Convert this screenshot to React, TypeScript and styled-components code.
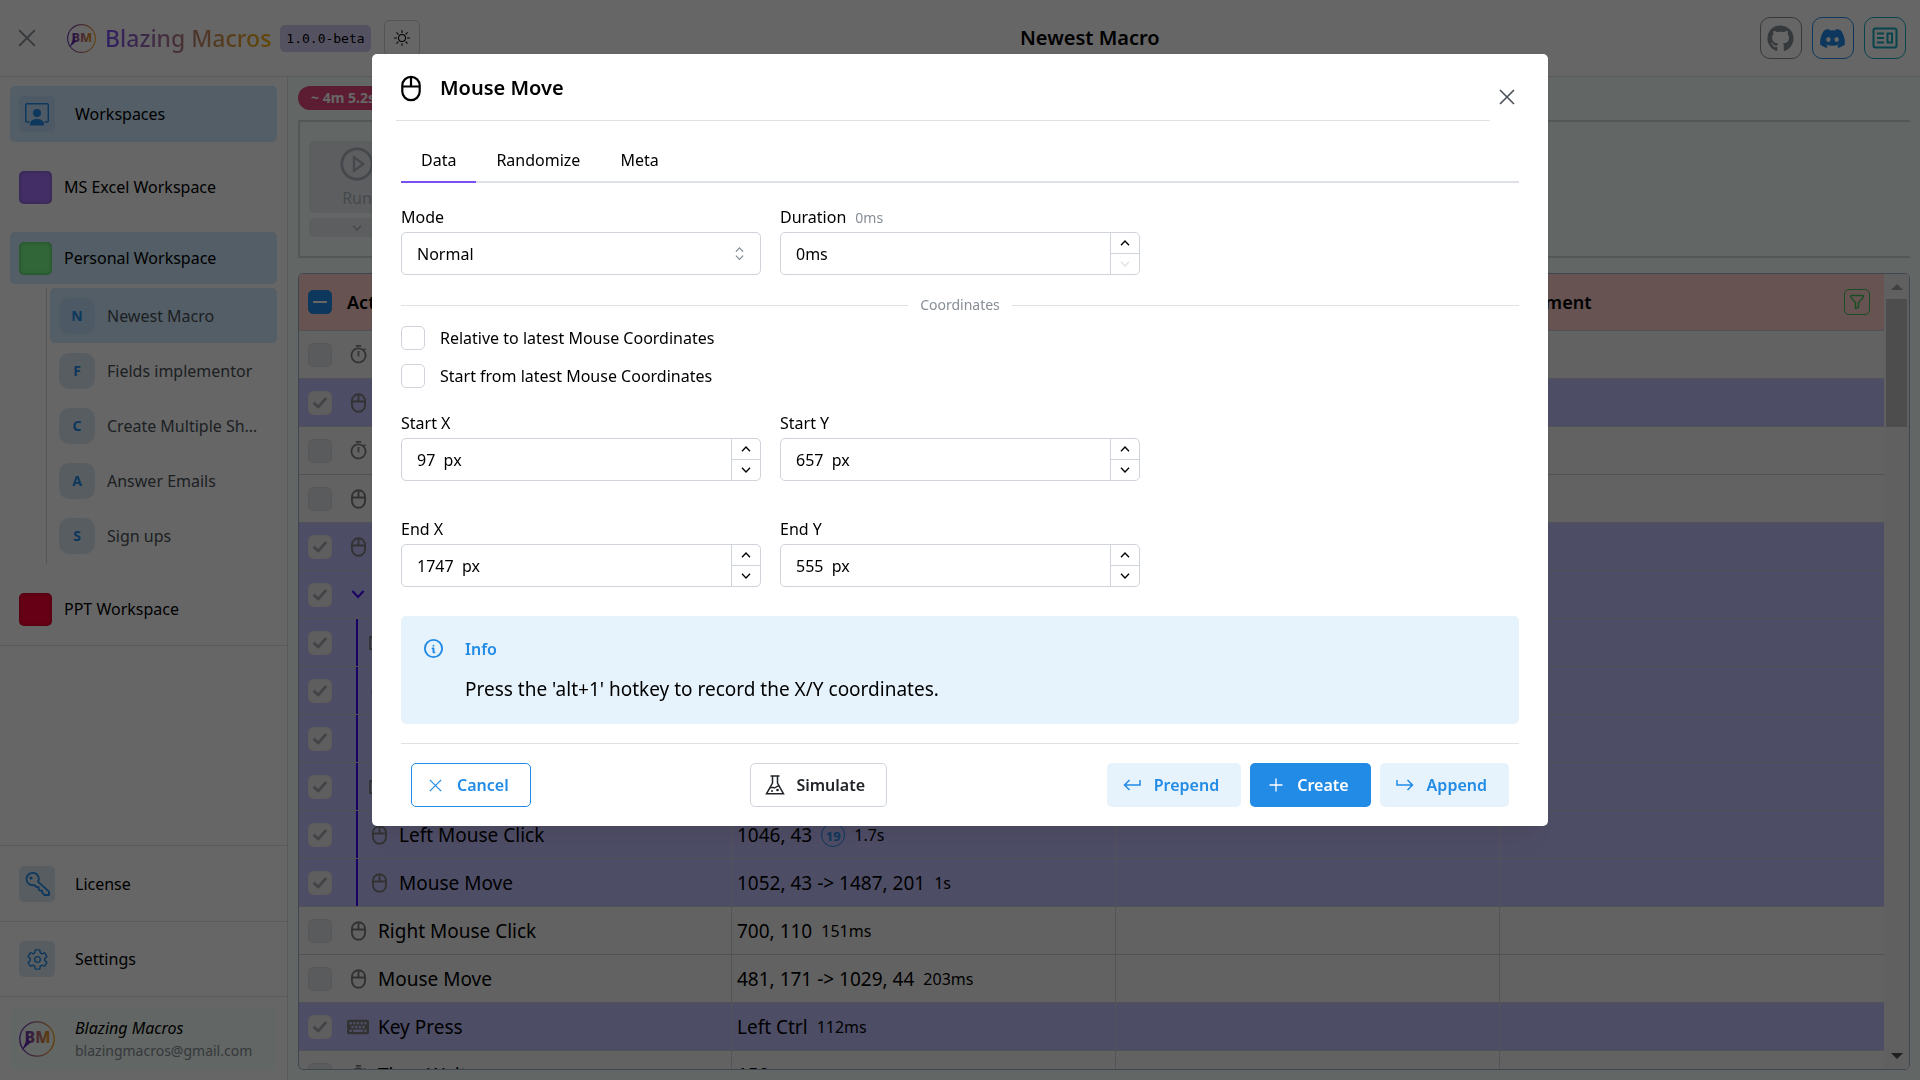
import React from "react";
import styled, { createGlobalStyle, css } from "styled-components";
import { BsSun, BsFunnel } from "react-icons/bs";
import { FaDiscord, FaGithub, FaKeyboard } from "react-icons/fa";
import { IoSettingsOutline } from "react-icons/io5";
import { MdOutlineTimer } from "react-icons/md";
import { AiOutlinePlayCircle } from "react-icons/ai";
import { TbInfoCircle } from "react-icons/tb";

const GlobalStyle = createGlobalStyle`
  *, *::before, *::after { box-sizing: border-box; }
  body { margin: 0; overflow: hidden; background: #fff; color: #000; font: 400 16px/24px "Noto Sans", sans-serif; }
  button, input, select { font: inherit; color: inherit; margin: 0; }
  button { padding: 0; border: 0; background: none; cursor: pointer; }
  a { color: inherit; text-decoration: none; }
  h1, h2, p, ul { margin: 0; padding: 0; list-style: none; }
  svg { display: block; flex: none; }
`;

/* ---------- icons ---------- */

const CloseIcon = ({ size = 16, stroke = 1 }: { size?: number; stroke?: number }) => (
  <svg width={size} height={size} viewBox="0 0 16 16" fill="none" stroke="currentColor" strokeWidth={stroke}>
    <path d="M1 1l14 14M15 1L1 15" />
  </svg>
);
const PlusIcon = () => (
  <svg width="14" height="14" viewBox="0 0 14 14" fill="none" stroke="currentColor" strokeWidth="1.3">
    <path d="M7 .5v13M.5 7h13" />
  </svg>
);
const ReturnIcon = ({ flip = false }: { flip?: boolean }) => (
  <svg width="18" height="14" viewBox="0 0 18 14" fill="none" stroke="currentColor" strokeWidth="1.5">
    {flip ? <path d="M1 2v5h15.500M11.500 2l5 5-5 5" /> : <path d="M17 2v5H1.500M6.500 2l-5 5 5 5" />}
  </svg>
);
const MouseIcon = ({ width, height, stroke }: { width: number; height: number; stroke: number }) => (
  <svg width={width} height={height} viewBox="0 0 20 26" fill="none" stroke="currentColor" strokeWidth={stroke}>
    <rect x="1.300" y="1.300" width="17.400" height="23.400" rx="8.700" />
    <path d="M1.300 11h17.400M10 1.300V11" />
  </svg>
);
const Chevron = ({ size = 10, up = false, stroke = 1.3 }: { size?: number; up?: boolean; stroke?: number }) => (
  <svg width={size} height={size * 0.6} viewBox="0 0 10 6" fill="none" stroke="currentColor" strokeWidth={stroke}>
    {up ? <path d="M1 5.300l4-4.300 4 4.300" /> : <path d="M1 .7L5 5l4-4.300" />}
  </svg>
);
const WorkspacesIcon = () => (
  <svg width="24" height="24" viewBox="0 0 24 24" fill="currentColor">
    <path d="M4.500 20H2a1.300 1.300 0 0 1-1.300-1.300V3A1.300 1.300 0 0 1 2 1.700h20A1.300 1.300 0 0 1 23.300 3v15.700A1.300 1.300 0 0 1 22 20h-2.500" fill="none" stroke="currentColor" strokeWidth="1.500" />
    <circle cx="12" cy="11" r="4" />
    <path d="M5 22.500C5 18.500 8.500 17 12 17s7 1.500 7 5.500c0 .6-.4 1-1 1H6c-.6 0-1-.4-1-1z" />
  </svg>
);
const KeyIcon = () => (
  <svg width="26" height="26" viewBox="0 0 26 26" fill="none" stroke="currentColor" strokeWidth="1.800" strokeLinejoin="round">
    <path d="M14.200 10.800A6.200 6.200 0 1 0 10.300 14l2.200 2.200h2.200v2.200l1.500 1.300h2v2l2.300 2.300H25v-3.400z" />
    <circle cx="7" cy="7" r="1.600" fill="currentColor" stroke="none" />
  </svg>
);
const NewsIcon = () => (
  <svg width="26" height="22" viewBox="0 0 26 22" fill="none" stroke="currentColor" strokeWidth="2">
    <rect x="1.500" y="1.500" width="23" height="19" rx="2" />
    <path d="M5 6.500h7M5 11h7M5 15.500h7" />
    <rect x="15.500" y="6.500" width="4.500" height="9" />
  </svg>
);
const FlaskIcon = () => (
  <svg width="20" height="20" viewBox="0 0 20 20" fill="none" stroke="currentColor" strokeWidth="1.500">
    <path d="M5.500 1h9M7.500 1v7L1.500 18.800h17L12.500 8V1" />
    <path d="M5 13c2-1.500 3.500.3 5.200-.4 1.600-.6 2-2 4-1.600" />
    <circle cx="7" cy="16" r="1" fill="currentColor" stroke="none" />
    <circle cx="12.500" cy="15" r="1.300" fill="currentColor" stroke="none" />
  </svg>
);
const CheckIcon = () => (
  <svg width="14" height="12" viewBox="0 0 14 12" fill="none" stroke="currentColor" strokeWidth="2.800" strokeLinecap="round" strokeLinejoin="round">
    <path d="M1.500 6.500l3.700 3.500 7.300-8" />
  </svg>
);
const CopyIcon = () => (
  <svg width="20" height="16" viewBox="0 0 20 16" fill="none" stroke="currentColor" strokeWidth="1.800">
    <path d="M6 2H1v12h8M8 1h11v9H8z" />
  </svg>
);
const Logo = ({ size }: { size: number }) => (
  <svg width={size} height={size} viewBox="0 0 36 36" role="img" aria-label="Blazing Macros logo">
    <defs>
      <linearGradient id="flame" x1="0" x2="1">
        <stop offset="0" stopColor="#5f2eb5" />
        <stop offset="0.5" stopColor="#b06a80" />
        <stop offset="1" stopColor="#f59f1a" />
      </linearGradient>
    </defs>
    <circle cx="18" cy="18" r="17.200" fill="none" stroke="url(#flame)" strokeWidth="1.300" />
    <text x="18.500" y="22" textAnchor="middle" fill="url(#flame)" fontFamily="Noto Sans" fontWeight="800" fontSize="16">BM</text>
    <path d="M9 16l-6 13 8-7z" fill="#5f2eb5" />
    <path d="M8 26.500h21" stroke="url(#flame)" strokeWidth="1.200" strokeDasharray="2 .5" />
  </svg>
);

/* ---------- page shell ---------- */

const Page = styled.div`
  display: flex;
  flex-direction: column;
  height: 100vh;
`;
const Header = styled.header`
  display: flex;
  align-items: center;
  justify-content: space-between;
  height: 77px;
  padding: 0 14px 0 18px;
  border-bottom: 1px solid #dee2e6;
`;
const HeaderGroup = styled.div<{ $gap: number }>`
  display: flex;
  align-items: center;
  gap: ${(p) => p.$gap}px;
`;
const MenuButton = styled.button`
  margin-right: 22px;
  color: #868e96;
`;
const Brand = styled.span`
  font-size: 23px;
  line-height: 32px;
  font-weight: 500;
  background: linear-gradient(90deg, #7950f2, #fab005);
  -webkit-background-clip: text;
  background-clip: text;
  color: transparent;
`;
const Version = styled.code`
  padding: 0 6px;
  border-radius: 5px;
  background: #d3cdf0;
  font: 13px/27px "DejaVu Sans Mono", monospace;
`;
const SunButton = styled.button`
  display: grid;
  place-items: center;
  width: 36px;
  height: 36px;
  margin-left: 4px;
  border: 1px solid #ced4da;
  border-radius: 5px;
`;
const PageTitle = styled.h1`
  font-size: 20px;
  line-height: 32px;
  font-weight: 600;
`;
const SocialLink = styled.a<{ $color: string }>`
  display: grid;
  place-items: center;
  width: 42px;
  height: 42px;
  border: 1px solid;
  border-radius: 10px;
  color: ${(p) => p.$color};
`;
const Body = styled.div`
  display: flex;
  flex: 1;
  min-height: 0;
`;

/* ---------- sidebar ---------- */

const Sidebar = styled.nav`
  display: flex;
  flex-direction: column;
  width: 288px;
  border-right: 1px solid #dee2e6;
`;
const WorkspaceList = styled.div`
  display: flex;
  flex-direction: column;
  gap: 19px;
  padding: 9px 10px 10px;
  border-bottom: 1px solid #dee2e6;
`;
const Spacer = styled.div`
  flex: 1;
`;
const activeBg = css`
  background: #d0ebff;
`;
const NavItem = styled.a<{ $active?: boolean; $height: number; $gap: number }>`
  display: flex;
  align-items: center;
  gap: ${(p) => p.$gap}px;
  height: ${(p) => p.$height}px;
  padding: 0 9px;
  border-radius: 5px;
  ${(p) => p.$active && activeBg}
`;
const NavLabel = styled.span<{ $muted?: boolean }>`
  white-space: nowrap;
  color: ${(p) => (p.$muted ? "#495057" : "#000")};
`;
const Tile = styled.span<{ $round?: boolean; $active?: boolean }>`
  display: grid;
  place-items: center;
  flex: none;
  width: 36px;
  height: 36px;
  border-radius: ${(p) => (p.$round ? 10 : 5)}px;
  background: ${(p) => (p.$active ? "#c0dffa" : "#dde8f4")};
  color: #228be6;
  font-weight: 700;
  font-size: 14px;
`;
const Swatch = styled.span<{ $color: string }>`
  flex: none;
  width: 33px;
  height: 33px;
  border-radius: 5px;
  background: ${(p) => p.$color};
  box-shadow: inset 0 0 4px rgba(0, 0, 0, 0.3);
`;
const MacroTree = styled.div`
  margin: 4px 0 0 36px;
  padding: 0 0 1px 3px;
  border-left: 1px solid #ced4da;
`;
const FooterItem = styled.div`
  padding: 10px;
  border-top: 1px solid #dee2e6;
`;
const User = styled.div`
  display: flex;
  align-items: center;
  gap: 20px;
  height: 63px;
  padding: 0 9px;
  border-radius: 5px;
  background: #f5fffa;
`;
const UserName = styled.div`
  font-style: italic;
`;
const UserMail = styled.div`
  font-size: 14px;
  line-height: 21px;
  color: #868e96;
`;

/* ---------- macro editor ---------- */

const Main = styled.main`
  display: flex;
  flex-direction: column;
  align-items: flex-start;
  flex: 1;
  min-width: 0;
  padding: 9px 10px 10px;
  background: #f5fffa;
`;
const DurationPill = styled.span`
  padding: 0 13px;
  border-radius: 12px;
  background: #e64980;
  color: #fff;
  font-size: 14px;
  font-weight: 700;
  line-height: 24px;
`;
const Toolbar = styled.div`
  align-self: stretch;
  height: 138px;
  margin: 10px 0 15px;
  padding: 19px 9px;
  border: 2px solid #d5d8d6;
  border-right: 0;
`;
const RunGroup = styled.div`
  display: flex;
  flex-direction: column;
  gap: 5px;
  width: 96px;
`;
const ToolButton = styled.button<{ $height: number }>`
  display: flex;
  flex-direction: column;
  align-items: center;
  justify-content: center;
  gap: 3px;
  height: ${(p) => p.$height}px;
  border-radius: 5px;
  background: #e9ecef;
  color: #adb5bd;
`;
const TableFrame = styled.div`
  display: flex;
  align-self: stretch;
  flex: 1;
  min-height: 0;
  overflow: hidden;
  border: 1px solid #9eafc8;
  border-radius: 5px;
  background: #f5f5f5;
`;
const TableClip = styled.div`
  flex: 1;
  min-width: 0;
  overflow: hidden;
`;
const Table = styled.table`
  width: 100%;
  table-layout: fixed;
  border-collapse: separate;
  border-spacing: 0;
`;
const FirstCol = styled.col`
  width: 433px;
`;
const Th = styled.th`
  height: 57px;
  padding: 0 5px;
  border-bottom: 1px solid #c9ccd6;
  background: #ffd0cd;
  text-align: left;
  font-size: 18px;
  font-weight: 600;
  &:first-child { padding: 0 9px; }
`;
const HeadCell = styled.div<{ $spread?: boolean }>`
  display: flex;
  align-items: center;
  justify-content: ${(p) => (p.$spread ? "space-between" : "flex-start")};
  gap: 15px;
`;
const FilterButton = styled.button`
  display: grid;
  place-items: center;
  width: 26px;
  height: 26px;
  margin-right: 9px;
  border: 1px solid #40c057;
  border-radius: 5px;
  color: #40c057;
`;
const Row = styled.tr<{ $selected: boolean }>`
  background: ${(p) => (p.$selected ? "#c3c1fe" : "transparent")};
`;
const Td = styled.td`
  height: 48px;
  padding: 0 5px;
  border-right: 1px solid #cfd3da;
  border-bottom: 1px solid #c9ccd6;
  &:first-child { padding: 0 9px; }
  &:last-child { border-right: 0; }
`;
const Cell = styled.div`
  display: flex;
  align-items: center;
  height: 47px;
  font-size: 19px;
  white-space: nowrap;
`;
const RowCheck = styled.span<{ $on?: boolean }>`
  display: inline-grid;
  flex: none;
  place-items: center;
  width: 24px;
  height: 24px;
  color: #a5abb3;
  > * { grid-area: 1 / 1; }
  > svg { pointer-events: none; }
  input {
    appearance: none;
    width: 24px;
    height: 24px;
    border: 1px solid ${(p) => (p.$on ? "#e3e6e8" : "#d3d7dc")};
    border-radius: 5px;
    background: ${(p) => (p.$on ? "#eaeaea" : "#e2e4e8")};
  }
`;
const HeadCheck = styled(RowCheck)`
  color: #fff;
  input { background: #228be6; border-color: #228be6; }
`;
const NestLine = styled.span`
  width: 2px;
  height: 47px;
  margin: 0 -5px 0 24px;
  background: #3c00ff;
`;
const IconSlot = styled.span<{ $accent?: boolean }>`
  display: grid;
  place-items: center;
  width: 22px;
  margin: 0 9px 0 15px;
  color: ${(p) => (p.$accent ? "#3c00ff" : "#7e7e7e")};
`;
const Time = styled.span`
  margin-left: 9px;
  font-size: 16px;
`;
const Repeat = styled.span`
  display: grid;
  place-items: center;
  width: 24px;
  height: 24px;
  margin-left: 9px;
  border: 1px solid #228be6;
  border-radius: 12px;
  color: #228be6;
  font-size: 13px;
  font-weight: 700;
`;
const ScrollRail = styled.div`
  display: flex;
  flex-direction: column;
  align-items: center;
  width: 25px;
  padding: 10px 0;
  background: #f1f1f1;
`;
const ScrollThumb = styled.div`
  width: 21px;
  height: 128px;
  margin: 9px 0 auto;
  background: #c1c1c1;
`;
const ScrollArrow = ({ down = false }: { down?: boolean }) => (
  <svg width="12" height="6" viewBox="0 0 12 6" fill={down ? "#505050" : "#a3a3a3"}>
    <path d={down ? "M0 0h12L6 6z" : "M0 6h12L6 0z"} />
  </svg>
);

/* ---------- modal ---------- */

const Overlay = styled.div`
  position: fixed;
  inset: 0;
  display: flex;
  align-items: flex-start;
  justify-content: center;
  padding: 5vh 24px;
  background: rgba(0, 0, 0, 0.6);
`;
const Dialog = styled.section`
  width: 100%;
  max-width: 1176px;
  border-radius: 5px;
  background: #fff;
  box-shadow: 0 1px 4px rgba(0, 0, 0, 0.05), 0 28px 23px -7px rgba(0, 0, 0, 0.05), 0 12px 12px -7px rgba(0, 0, 0, 0.04);
`;
const DialogHead = styled.div`
  display: flex;
  padding: 0 24px;
`;
const DialogTitle = styled.h2`
  display: flex;
  align-items: center;
  gap: 19px;
  flex: 1;
  height: 67px;
  padding: 2px 5px 0;
  border-bottom: 1px solid #dee2e6;
  font-size: 20px;
  font-weight: 600;
`;
const DialogClose = styled.button`
  display: grid;
  place-items: center;
  width: 34px;
  height: 34px;
  margin-top: 26px;
  color: #495057;
`;
const DialogBody = styled.div`
  padding: 20px 29px 19px;
`;
const Tabs = styled.div`
  display: flex;
  border-bottom: 2px solid #dee2e6;
`;
const Tab = styled.button<{ $active?: boolean }>`
  height: 42px;
  margin-bottom: -2px;
  padding: 0 20px 2px;
  border-bottom: 2px solid ${(p) => (p.$active ? "#7950f2" : "transparent")};
`;
const FieldGrid = styled.div`
  display: grid;
  grid-template-columns: repeat(3, 1fr);
  gap: 36px 19px;
  margin-top: 22px;
`;
const Field = styled.div`
  display: flex;
  flex-direction: column;
  gap: 3px;
`;
const FieldLabel = styled.label`
  height: 24px;
`;
const Hint = styled.span`
  margin-left: 9px;
  font-size: 14px;
  color: #868e96;
`;
const Control = styled.div`
  display: flex;
  align-items: center;
  height: 43px;
  border: 1px solid #ced4da;
  border-radius: 5px;
  overflow: hidden;
`;
const TextInput = styled.input`
  flex: 1;
  min-width: 0;
  height: 100%;
  padding: 0 15px;
  border: 0;
  outline: 0;
  background: none;
`;
const Steppers = styled.div`
  display: flex;
  flex-direction: column;
  align-self: stretch;
  width: 29px;
  border-left: 1px solid #ced4da;
`;
const Stepper = styled.button`
  display: grid;
  place-items: center;
  flex: 1;
  & + & { border-top: 1px solid #ced4da; }
  &:disabled { color: #dee2e6; }
`;
const Select = styled.select`
  flex: 1;
  height: 100%;
  padding: 0 15px;
  margin-right: -24px;
  border: 0;
  outline: 0;
  appearance: none;
  background: none;
`;
const SelectArrows = styled.span`
  display: flex;
  flex-direction: column;
  gap: 3px;
  width: 25px;
  color: #868e96;
  pointer-events: none;
`;
const Divider = styled.div`
  display: flex;
  align-items: center;
  gap: 12px;
  margin: 20px 0 11px;
  font-size: 14px;
  line-height: 20px;
  color: #868e96;
  &::before, &::after { content: ""; flex: 1; border-top: 1px solid #dee2e6; }
`;
const Checks = styled.div`
  display: flex;
  flex-direction: column;
  align-items: flex-start;
  gap: 14px;
  padding-bottom: 1px;
`;
const CheckLabel = styled.label`
  display: flex;
  align-items: center;
  gap: 15px;
  input {
    appearance: none;
    width: 24px;
    height: 24px;
    border: 1px solid #ced4da;
    border-radius: 5px;
  }
`;
const Alert = styled.div`
  display: flex;
  gap: 20px;
  margin: 29px 0 19px;
  padding: 21px;
  border-radius: 5px;
  background: #e7f3fc;
`;
const AlertTitle = styled.div`
  margin-bottom: 14px;
  font-weight: 600;
  color: #228be6;
`;
const AlertText = styled.p`
  font-size: 19px;
  line-height: 28px;
`;
const AlertIcon = styled.span`
  color: #228be6;
`;
const Actions = styled.div`
  display: flex;
  justify-content: space-between;
  padding: 19px 10px 0;
  border-top: 1px solid #dee2e6;
`;
const ActionGroup = styled.div`
  display: flex;
  gap: 9px;
`;
const kinds = {
  outline: "color:#228be6;border-color:#228be6;",
  plain: "color:#212529;border-color:#ced4da;",
  light: "color:#228be6;background:#e7f3fc;",
  filled: "color:#fff;background:#228be6;",
};
const ActionButton = styled.button<{ $kind: keyof typeof kinds; $gap: number; $pad: string }>`
  display: flex;
  align-items: center;
  gap: ${(p) => p.$gap}px;
  height: 44px;
  padding: ${(p) => p.$pad};
  border: 1px solid transparent;
  border-radius: 5px;
  font-weight: 600;
  ${(p) => kinds[p.$kind]}
`;

/* ---------- data ---------- */

const macros = ["Newest Macro", "Fields implementor", "Create Multiple Sh…", "Answer Emails", "Sign ups"];

type Kind = "timer" | "mouse" | "group" | "copy" | "keyboard";
type Action = { kind: Kind; name: string; on: boolean; nested?: boolean; value?: string; repeat?: number; time?: string };

const actions: Action[] = [
  { kind: "timer", name: "", on: false },
  { kind: "mouse", name: "", on: true },
  { kind: "timer", name: "", on: false },
  { kind: "mouse", name: "", on: false },
  { kind: "mouse", name: "", on: true },
  { kind: "group", name: "", on: true },
  { kind: "copy", name: "", on: true, nested: true },
  { kind: "timer", name: "", on: true, nested: true },
  { kind: "mouse", name: "", on: true, nested: true },
  { kind: "copy", name: "", on: true, nested: true },
  { kind: "mouse", name: "Left Mouse Click", on: true, nested: true, value: "1046, 43", repeat: 19, time: "1.7s" },
  { kind: "mouse", name: "Mouse Move", on: true, nested: true, value: "1052, 43 -> 1487, 201", time: "1s" },
  { kind: "mouse", name: "Right Mouse Click", on: false, value: "700, 110", time: "151ms" },
  { kind: "mouse", name: "Mouse Move", on: false, value: "481, 171 -> 1029, 44", time: "203ms" },
  { kind: "keyboard", name: "Key Press", on: true, value: "Left Ctrl", time: "112ms" },
  { kind: "timer", name: "Time Wait", on: false, value: "150ms" },
];

const kindIcon: Record<Kind, React.ReactNode> = {
  timer: <MdOutlineTimer size={21} />,
  mouse: <MouseIcon width={15} height={20} stroke={2.6} />,
  group: <Chevron size={14} stroke={1.4} />,
  copy: <CopyIcon />,
  keyboard: <FaKeyboard size={22} />,
};

const NumberField = ({ id, label, hint, value, atMin }: { id: string; label: string; hint?: string; value: string; atMin?: boolean }) => (
  <Field>
    <FieldLabel htmlFor={id}>
      {label}
      {hint && <Hint>{hint}</Hint>}
    </FieldLabel>
    <Control>
      <TextInput id={id} defaultValue={value} />
      <Steppers>
        <Stepper aria-label={`Increase ${label}`}><Chevron up /></Stepper>
        <Stepper aria-label={`Decrease ${label}`} disabled={atMin}><Chevron /></Stepper>
      </Steppers>
    </Control>
  </Field>
);

const ActionRow = ({ action }: { action: Action }) => (
  <Row $selected={action.on}>
    <Td>
      <Cell>
        <RowCheck $on={action.on}>
          <input type="checkbox" defaultChecked={action.on} aria-label="Select action" />
          {action.on && <CheckIcon />}
        </RowCheck>
        {action.nested && <NestLine />}
        <IconSlot $accent={action.kind === "group"}>{kindIcon[action.kind]}</IconSlot>
        {action.name}
      </Cell>
    </Td>
    <Td>
      <Cell>
        {action.value}
        {action.repeat && <Repeat>{action.repeat}</Repeat>}
        {action.time && <Time>{action.time}</Time>}
      </Cell>
    </Td>
    <Td />
    <Td />
  </Row>
);

export default function App() {
  return (
    <>
      <GlobalStyle />
      <Page>
        <Header>
          <HeaderGroup $gap={9}>
            <MenuButton aria-label="Close menu"><CloseIcon size={18} stroke={1.6} /></MenuButton>
            <Logo size={29} />
            <Brand>Blazing Macros</Brand>
            <Version>1.0.0-beta</Version>
            <SunButton aria-label="Toggle theme"><BsSun size={16} /></SunButton>
          </HeaderGroup>
          <PageTitle>Newest Macro</PageTitle>
          <HeaderGroup $gap={10}>
            <SocialLink href="#github" aria-label="GitHub" $color="#868e96"><FaGithub size={27} /></SocialLink>
            <SocialLink href="#discord" aria-label="Discord" $color="#228be6"><FaDiscord size={27} /></SocialLink>
            <SocialLink href="#docs" aria-label="Docs" $color="#15aabf"><NewsIcon /></SocialLink>
          </HeaderGroup>
        </Header>
        <Body>
          <Sidebar>
            <WorkspaceList>
              <NavItem href="#workspaces" $active $height={56} $gap={20}>
                <Tile $active><WorkspacesIcon /></Tile>
                <NavLabel>Workspaces</NavLabel>
              </NavItem>
              <NavItem href="#excel" $height={52} $gap={12}>
                <Swatch $color="#a875ff" />
                <NavLabel>MS Excel Workspace</NavLabel>
              </NavItem>
              <div>
                <NavItem href="#personal" $active $height={52} $gap={12}>
                  <Swatch $color="#7aff8c" />
                  <NavLabel>Personal Workspace</NavLabel>
                </NavItem>
                <MacroTree>
                  {macros.map((name, i) => (
                    <NavItem key={name} href="#macro" $active={i === 0} $height={55} $gap={12}>
                      <Tile $round $active={i === 0}>{name[0]}</Tile>
                      <NavLabel $muted>{name}</NavLabel>
                    </NavItem>
                  ))}
                </MacroTree>
              </div>
              <NavItem href="#ppt" $height={52} $gap={12}>
                <Swatch $color="#ff0033" />
                <NavLabel>PPT Workspace</NavLabel>
              </NavItem>
            </WorkspaceList>
            <Spacer />
            <FooterItem>
              <NavItem href="#license" $height={55} $gap={20}>
                <Tile><KeyIcon /></Tile>
                <NavLabel>License</NavLabel>
              </NavItem>
            </FooterItem>
            <FooterItem>
              <NavItem href="#settings" $height={54} $gap={20}>
                <Tile><IoSettingsOutline size={23} /></Tile>
                <NavLabel>Settings</NavLabel>
              </NavItem>
            </FooterItem>
            <FooterItem>
              <User>
                <Logo size={36} />
                <div>
                  <UserName>Blazing Macros</UserName>
                  <UserMail>blazingmacros@gmail.com</UserMail>
                </div>
              </User>
            </FooterItem>
          </Sidebar>
          <Main>
            <DurationPill>~ 4m 5.2s</DurationPill>
            <Toolbar>
              <RunGroup>
                <ToolButton $height={72} disabled>
                  <AiOutlinePlayCircle size={38} />
                  Run
                </ToolButton>
                <ToolButton $height={19} disabled aria-label="Run options"><Chevron stroke={1.6} /></ToolButton>
              </RunGroup>
            </Toolbar>
            <TableFrame>
              <TableClip>
                <Table>
                  <colgroup><FirstCol /><col /><col /><col /></colgroup>
                  <thead>
                    <tr>
                      <Th>
                        <HeadCell>
                          <HeadCheck $on>
                            <input type="checkbox" aria-label="Select all actions" />
                            <svg width="14" height="2" viewBox="0 0 14 2"><path d="M0 1h14" stroke="currentColor" strokeWidth="2" /></svg>
                          </HeadCheck>
                          Actions
                        </HeadCell>
                      </Th>
                      <Th />
                      <Th />
                      <Th>
                        <HeadCell $spread>
                          Comment
                          <FilterButton aria-label="Filter comments"><BsFunnel size={16} strokeWidth={0.5} /></FilterButton>
                        </HeadCell>
                      </Th>
                    </tr>
                  </thead>
                  <tbody>
                    {actions.map((action, i) => <ActionRow key={i} action={action} />)}
                  </tbody>
                </Table>
              </TableClip>
              <ScrollRail>
                <ScrollArrow />
                <ScrollThumb />
                <ScrollArrow down />
              </ScrollRail>
            </TableFrame>
          </Main>
        </Body>
      </Page>

      <Overlay>
        <Dialog role="dialog" aria-modal="true" aria-labelledby="dialog-title">
          <DialogHead>
            <DialogTitle id="dialog-title">
              <MouseIcon width={20} height={27} stroke={2.2} />
              Mouse Move
            </DialogTitle>
            <DialogClose aria-label="Close"><CloseIcon size={16} stroke={1.6} /></DialogClose>
          </DialogHead>
          <DialogBody>
            <Tabs role="tablist">
              <Tab role="tab" aria-selected="true" $active>Data</Tab>
              <Tab role="tab" aria-selected="false">Randomize</Tab>
              <Tab role="tab" aria-selected="false">Meta</Tab>
            </Tabs>
            <FieldGrid>
              <Field>
                <FieldLabel htmlFor="mode">Mode</FieldLabel>
                <Control>
                  <Select id="mode" defaultValue="Normal"><option>Normal</option></Select>
                  <SelectArrows><Chevron size={9} up /><Chevron size={9} /></SelectArrows>
                </Control>
              </Field>
              <NumberField id="duration" label="Duration" hint="0ms" value="0ms" atMin />
            </FieldGrid>
            <Divider>Coordinates</Divider>
            <Checks>
              <CheckLabel><input type="checkbox" />Relative to latest Mouse Coordinates</CheckLabel>
              <CheckLabel><input type="checkbox" />Start from latest Mouse Coordinates</CheckLabel>
            </Checks>
            <FieldGrid>
              <NumberField id="start-x" label="Start X" value={"97\u00a0 px"} />
              <NumberField id="start-y" label="Start Y" value={"657\u00a0 px"} />
              <span />
              <NumberField id="end-x" label="End X" value={"1747\u00a0 px"} />
              <NumberField id="end-y" label="End Y" value={"555\u00a0 px"} />
            </FieldGrid>
            <Alert role="note">
              <AlertIcon><TbInfoCircle size={23} /></AlertIcon>
              <div>
                <AlertTitle>Info</AlertTitle>
                <AlertText>Press the 'alt+1' hotkey to record the X/Y coordinates.</AlertText>
              </div>
            </Alert>
            <Actions>
              <ActionButton $kind="outline" $gap={15} $pad="0 21px 0 17px"><CloseIcon size={13} stroke={1.5} />Cancel</ActionButton>
              <ActionButton $kind="plain" $gap={11} $pad="0 21px 0 14px"><FlaskIcon />Simulate</ActionButton>
              <ActionGroup>
                <ActionButton $kind="light" $gap={13} $pad="0 21px 0 15px"><ReturnIcon />Prepend</ActionButton>
                <ActionButton $kind="filled" $gap={14} $pad="0 21px 0 18px"><PlusIcon />Create</ActionButton>
                <ActionButton $kind="light" $gap={13} $pad="0 21px 0 15px"><ReturnIcon flip />Append</ActionButton>
              </ActionGroup>
            </Actions>
          </DialogBody>
        </Dialog>
      </Overlay>
    </>
  );
}
